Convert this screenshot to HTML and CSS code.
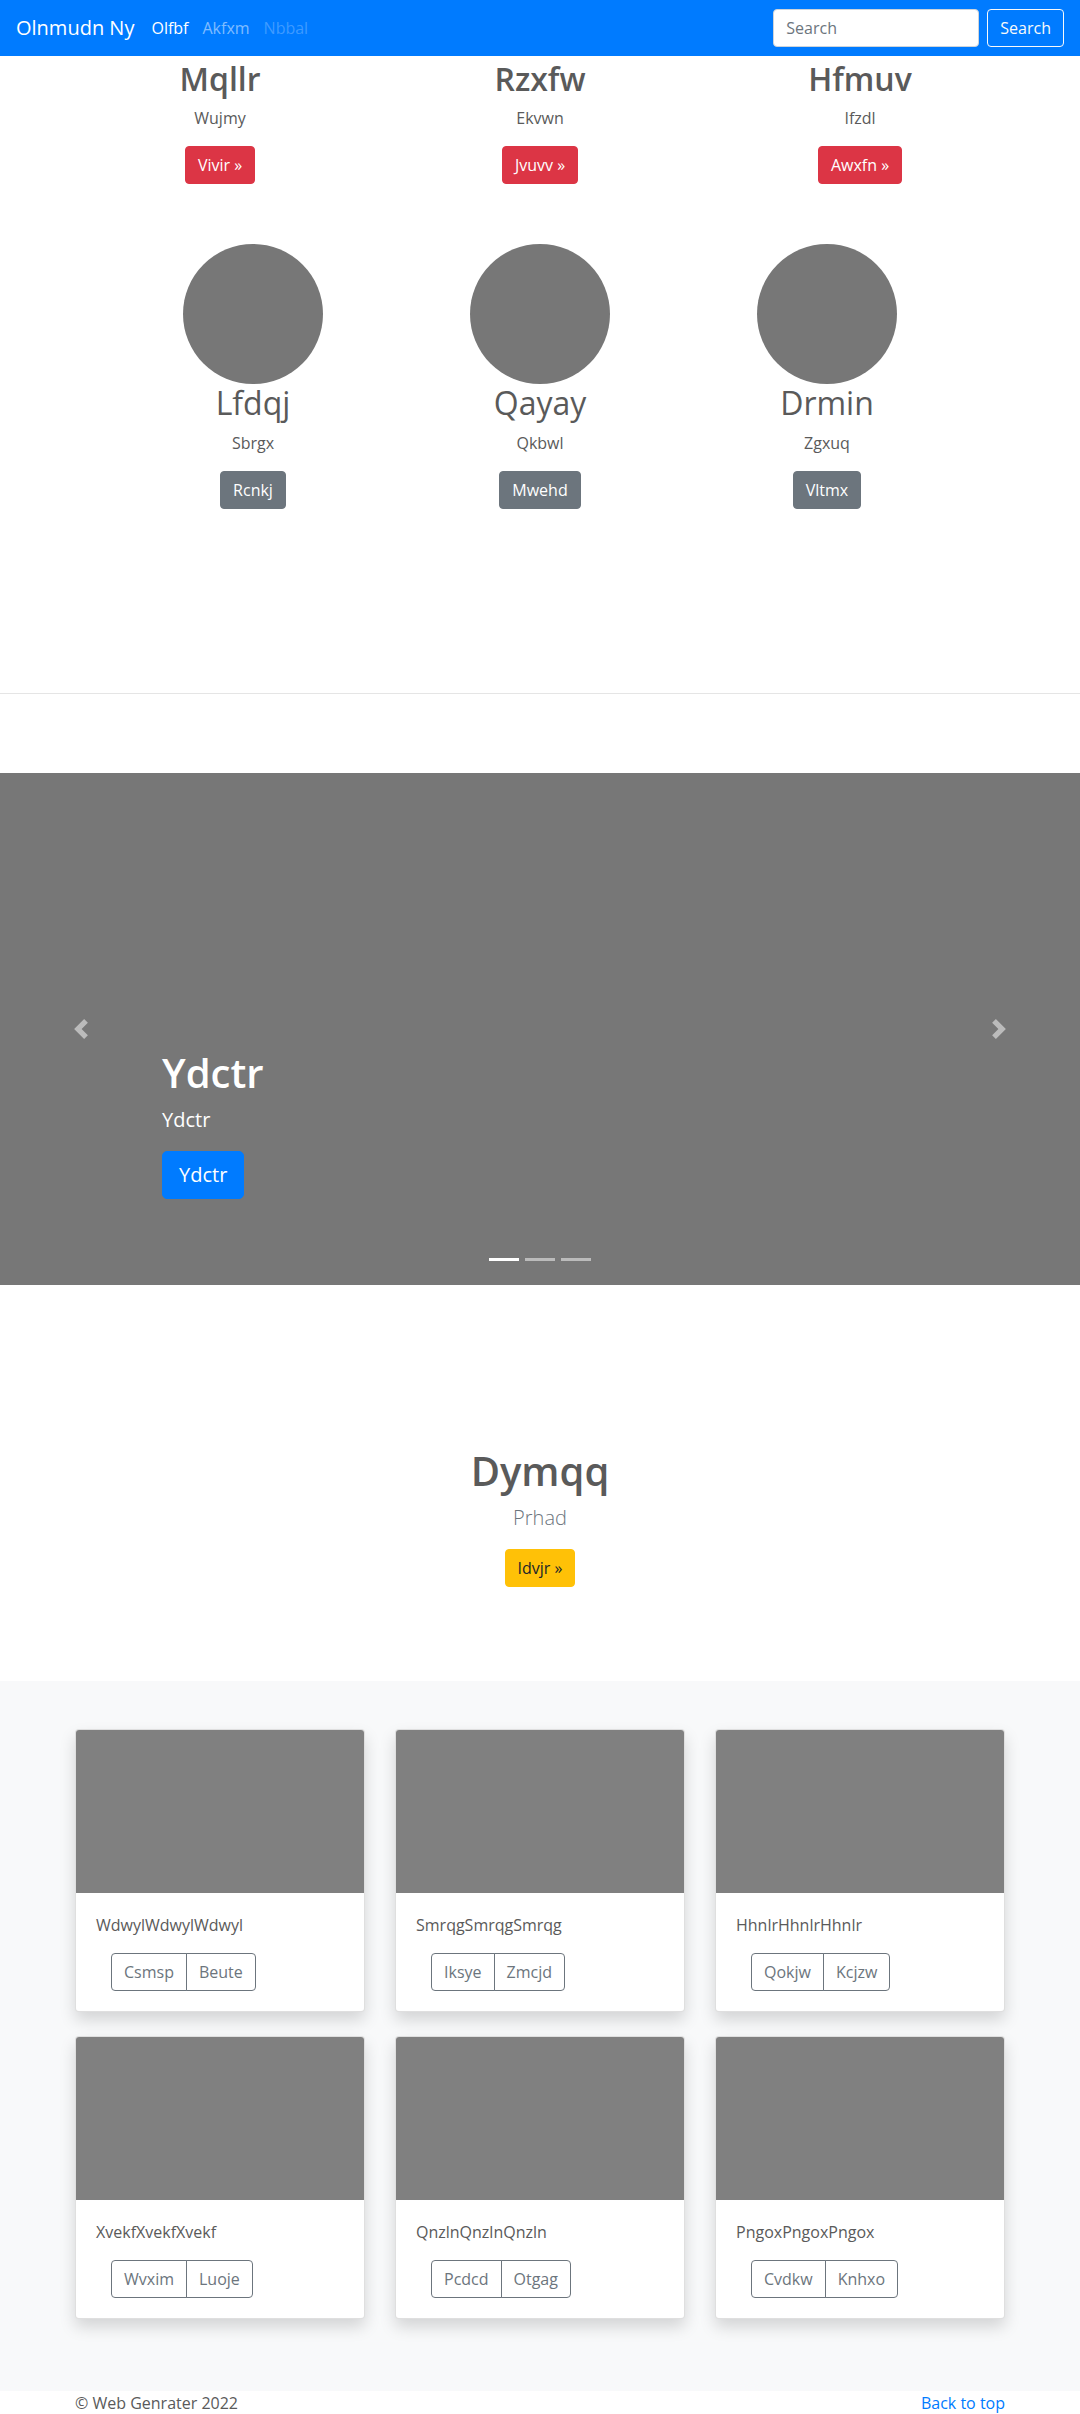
FILE: index.html
```html
<!DOCTYPE html>
<html lang="en">
<head>
<meta charset="utf-8">
<title>Olnmudn Ny</title>
<link rel="stylesheet" href="styles.css">
</head>
<body>
<header class="navbar">
  <a class="brand" href="#">Olnmudn Ny</a>
  <nav class="nav">
    <a class="nav-link active" href="#">Olfbf</a>
    <a class="nav-link" href="#">Akfxm</a>
    <a class="nav-link disabled" href="#">Nbbal</a>
  </nav>
  <form class="search">
    <input class="search-input" type="text" placeholder="Search">
    <button class="btn btn-outline-light" type="button">Search</button>
  </form>
</header>

<main>
  <section class="features">
    <div class="feature-row row-one">
      <div class="feature">
        <h2 class="feature-title bold">Mqllr</h2>
        <p class="feature-text">Wujmy</p>
        <p class="feature-action"><a class="btn btn-danger" href="#">Vivir »</a></p>
      </div>
      <div class="feature">
        <h2 class="feature-title bold">Rzxfw</h2>
        <p class="feature-text">Ekvwn</p>
        <p class="feature-action"><a class="btn btn-danger" href="#">Jvuvv »</a></p>
      </div>
      <div class="feature">
        <h2 class="feature-title bold">Hfmuv</h2>
        <p class="feature-text">Ifzdl</p>
        <p class="feature-action"><a class="btn btn-danger" href="#">Awxfn »</a></p>
      </div>
    </div>

    <div class="feature-row row-two">
      <div class="feature">
        <div class="avatar"></div>
        <h2 class="feature-title">Lfdqj</h2>
        <p class="feature-text">Sbrgx</p>
        <p class="feature-action"><a class="btn btn-secondary" href="#">Rcnkj</a></p>
      </div>
      <div class="feature">
        <div class="avatar"></div>
        <h2 class="feature-title">Qayay</h2>
        <p class="feature-text">Qkbwl</p>
        <p class="feature-action"><a class="btn btn-secondary" href="#">Mwehd</a></p>
      </div>
      <div class="feature">
        <div class="avatar"></div>
        <h2 class="feature-title">Drmin</h2>
        <p class="feature-text">Zgxuq</p>
        <p class="feature-action"><a class="btn btn-secondary" href="#">Vltmx</a></p>
      </div>
    </div>
  </section>

  <hr class="divider">

  <section class="carousel">
    <a class="carousel-control prev" href="#" aria-label="Previous">
      <svg viewBox="0 0 8 8" width="20" height="20"><path d="M5.25 0l-4 4 4 4 1.5-1.5L4.25 4l2.5-2.5L5.25 0z"/></svg>
    </a>
    <a class="carousel-control next" href="#" aria-label="Next">
      <svg viewBox="0 0 8 8" width="20" height="20"><path d="M2.75 0l-1.5 1.5L3.75 4l-2.5 2.5L2.75 8l4-4-4-4z"/></svg>
    </a>
    <div class="carousel-caption">
      <h1 class="caption-title">Ydctr</h1>
      <p class="caption-text">Ydctr</p>
      <div class="caption-action"><a class="btn btn-lg btn-primary" href="#">Ydctr</a></div>
    </div>
    <ol class="indicators">
      <li class="indicator active"></li>
      <li class="indicator"></li>
      <li class="indicator"></li>
    </ol>
  </section>

  <section class="hero">
    <h1 class="hero-title">Dymqq</h1>
    <p class="lead">Prhad</p>
    <p class="hero-action"><a class="btn btn-warning" href="#">Idvjr »</a></p>
  </section>

  <section class="album">
    <div class="card-grid">
      <div class="card">
        <div class="card-img"></div>
        <div class="card-body">
          <p class="card-text">WdwylWdwylWdwyl</p>
          <div class="btn-group"><a class="btn btn-outline-secondary" href="#">Csmsp</a><a class="btn btn-outline-secondary" href="#">Beute</a></div>
        </div>
      </div>
      <div class="card">
        <div class="card-img"></div>
        <div class="card-body">
          <p class="card-text">SmrqgSmrqgSmrqg</p>
          <div class="btn-group"><a class="btn btn-outline-secondary" href="#">Iksye</a><a class="btn btn-outline-secondary" href="#">Zmcjd</a></div>
        </div>
      </div>
      <div class="card">
        <div class="card-img"></div>
        <div class="card-body">
          <p class="card-text">HhnlrHhnlrHhnlr</p>
          <div class="btn-group"><a class="btn btn-outline-secondary" href="#">Qokjw</a><a class="btn btn-outline-secondary" href="#">Kcjzw</a></div>
        </div>
      </div>
      <div class="card">
        <div class="card-img"></div>
        <div class="card-body">
          <p class="card-text">XvekfXvekfXvekf</p>
          <div class="btn-group"><a class="btn btn-outline-secondary" href="#">Wvxim</a><a class="btn btn-outline-secondary" href="#">Luoje</a></div>
        </div>
      </div>
      <div class="card">
        <div class="card-img"></div>
        <div class="card-body">
          <p class="card-text">QnzlnQnzlnQnzln</p>
          <div class="btn-group"><a class="btn btn-outline-secondary" href="#">Pcdcd</a><a class="btn btn-outline-secondary" href="#">Otgag</a></div>
        </div>
      </div>
      <div class="card">
        <div class="card-img"></div>
        <div class="card-body">
          <p class="card-text">PngoxPngoxPngox</p>
          <div class="btn-group"><a class="btn btn-outline-secondary" href="#">Cvdkw</a><a class="btn btn-outline-secondary" href="#">Knhxo</a></div>
        </div>
      </div>
    </div>
  </section>
</main>

<footer class="footer">
  <p class="footer-text">© Web Genrater 2022</p>
  <a class="back-top" href="#">Back to top</a>
</footer>
</body>
</html>
```

FILE: styles.css
```css
* { box-sizing: border-box; }
html, body { margin: 0; padding: 0; }
body {
  font-family: "Open Sans", "Noto Sans", "DejaVu Sans", sans-serif;
  font-size: 16px;
  line-height: 1.5;
  color: #5a5a5a;
  background: #fff;
}
a { text-decoration: none; }

/* Navbar */
.navbar {
  height: 56px;
  background: #007bff;
  display: flex;
  align-items: center;
  padding: 0 16px;
}
.brand {
  font-size: 20px;
  line-height: 30px;
  color: #fff;
  margin-right: 10px;
}
.nav { display: flex; }
.nav-link {
  padding: 8px 7px;
  color: rgba(255, 255, 255, 0.5);
}
.nav-link.active { color: #fff; }
.nav-link.disabled { color: rgba(255, 255, 255, 0.25); }
.search {
  margin: 0 0 0 auto;
  display: flex;
  gap: 8px;
}
.search-input {
  width: 206px;
  height: 38px;
  padding: 6px 12px;
  font: inherit;
  color: #495057;
  background: #fff;
  border: 1px solid #ced4da;
  border-radius: 4px;
}
.search-input::placeholder { color: #6c757d; }

/* Buttons */
.btn {
  display: inline-block;
  font-family: inherit;
  font-size: 16px;
  line-height: 24px;
  padding: 6px 12px;
  border: 1px solid transparent;
  border-radius: 4px;
  cursor: pointer;
  text-align: center;
}
.btn-outline-light { color: #f8f9fa; border-color: #f8f9fa; background: transparent; }
.btn-danger { color: #fff; background: #dc3545; border-color: #dc3545; }
.btn-secondary { color: #fff; background: #6c757d; border-color: #6c757d; }
.btn-primary { color: #fff; background: #007bff; border-color: #007bff; }
.btn-warning { color: #212529; background: #ffc107; border-color: #ffc107; }
.btn-outline-secondary { color: #6c757d; border-color: #6c757d; background: transparent; }
.btn-lg {
  font-size: 20px;
  line-height: 30px;
  padding: 8px 16px;
  border-radius: 5px;
}

/* Features */
.feature-row {
  display: grid;
  justify-content: center;
  text-align: center;
}
.row-one { grid-template-columns: repeat(3, 320px); padding-top: 4px; }
.row-two { grid-template-columns: repeat(3, 287px); margin-top: 44px; }
.feature-title {
  margin: 0 0 8px;
  font-size: 32px;
  line-height: 1.2;
  font-weight: 400;
  color: #5a5a5a;
}
.feature-title.bold { font-weight: 600; }
.feature-text { margin: 0 0 16px; }
.feature-action { margin: 0 0 16px; }
.avatar {
  width: 140px;
  height: 140px;
  border-radius: 50%;
  background: #777;
  margin: 0 auto;
}

.divider {
  margin: 168px 0 0;
  border: 0;
  border-top: 1px solid rgba(0, 0, 0, 0.1);
  height: 0;
}

/* Carousel */
.carousel {
  position: relative;
  margin-top: 79px;
  height: 512px;
  background: #777;
  display: flex;
  flex-direction: column;
  justify-content: flex-end;
  padding: 0 162px 86px;
}
.carousel-caption { color: #fff; }
.caption-title {
  margin: 0 0 8px;
  font-size: 40px;
  line-height: 1.2;
  font-weight: 600;
}
.caption-text {
  margin: 0 0 16px;
  font-size: 20px;
  line-height: 30px;
}
.caption-action { display: flex; }
.carousel-control {
  position: absolute;
  top: 246px;
  width: 20px;
  height: 20px;
  fill: #fff;
  opacity: 0.5;
}
.carousel-control svg { display: block; }
.carousel-control.prev { left: 71px; }
.carousel-control.next { right: 71px; }
.indicators {
  position: absolute;
  left: 0;
  right: 0;
  bottom: 24px;
  margin: 0;
  padding: 0;
  list-style: none;
  display: flex;
  justify-content: center;
  gap: 6px;
}
.indicator {
  width: 30px;
  height: 3px;
  background: #fff;
  opacity: 0.5;
}
.indicator.active { opacity: 1; }

/* Hero */
.hero {
  text-align: center;
  padding: 162px 0 94px;
}
.hero-title {
  margin: 0 0 8px;
  font-size: 40px;
  line-height: 1.2;
  font-weight: 600;
  color: #5a5a5a;
}
.lead {
  margin: 0 0 16px;
  font-size: 20px;
  line-height: 30px;
  font-weight: 300;
  color: #6c757d;
}
.hero-action { margin: 0; }

/* Album */
.album {
  background: #f8f9fa;
  padding: 48px 0 72px;
}
.card-grid {
  width: 930px;
  margin: 0 auto;
  display: grid;
  grid-template-columns: repeat(3, 1fr);
  column-gap: 30px;
  row-gap: 24px;
}
.card {
  background: #fff;
  border: 1px solid rgba(0, 0, 0, 0.125);
  border-radius: 4px;
  overflow: hidden;
  box-shadow: 0 8px 16px rgba(0, 0, 0, 0.15);
}
.card-img {
  height: 163px;
  background: #808080;
}
.card-body { padding: 20px; }
.card-text { margin: 0 0 16px; }
.btn-group {
  display: inline-flex;
  margin-left: 15px;
}
.btn-group .btn:first-child { border-top-right-radius: 0; border-bottom-right-radius: 0; }
.btn-group .btn + .btn {
  margin-left: -1px;
  border-top-left-radius: 0;
  border-bottom-left-radius: 0;
}

/* Footer */
.footer {
  width: 930px;
  margin: 0 auto;
  display: flex;
  justify-content: space-between;
  padding-bottom: 48px;
}
.footer-text { margin: 0; color: #5a5a5a; }
.back-top { color: #007bff; }
```
